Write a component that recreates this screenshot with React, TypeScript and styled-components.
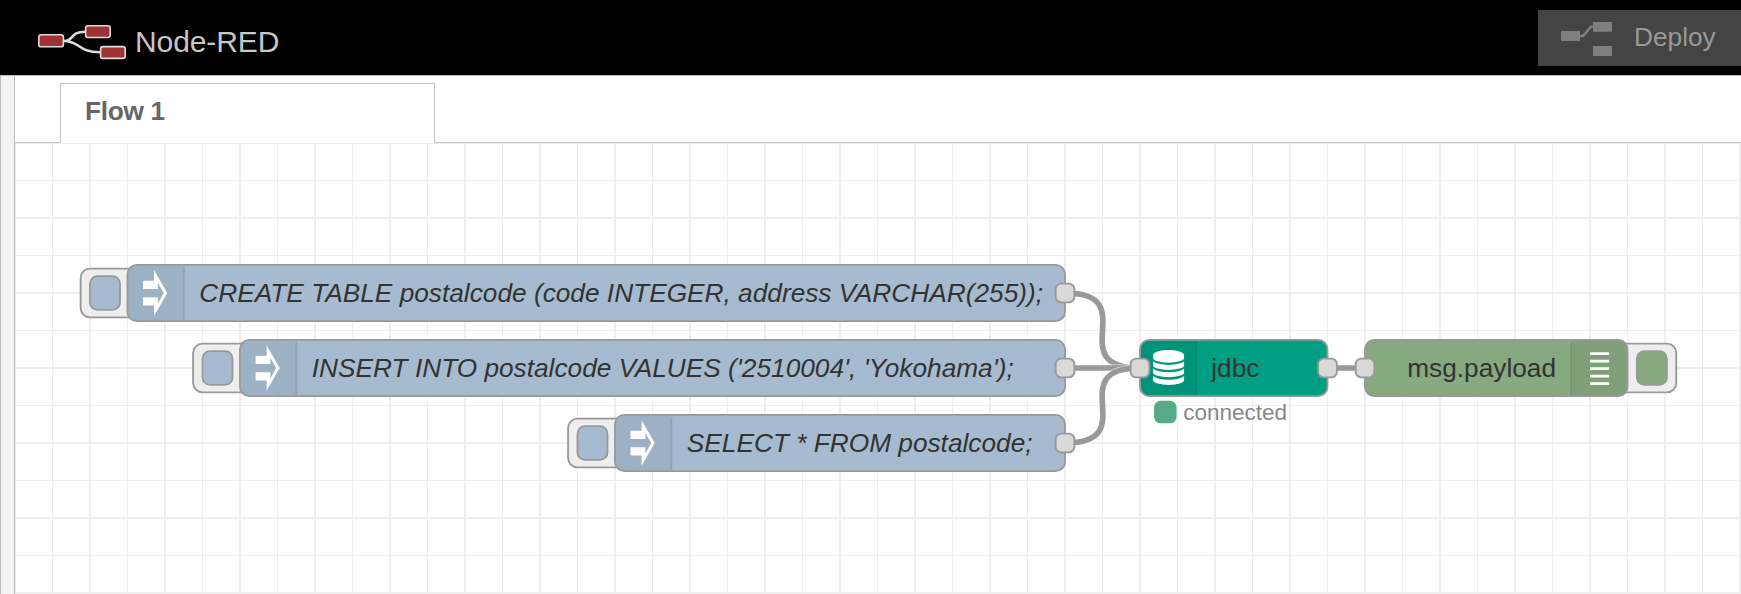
import React from "react";
import styled, { createGlobalStyle, css } from "styled-components";

const GRID = 75;
const SCALE = 1.875;

const GlobalStyle = createGlobalStyle`
  html, body { margin: 0; padding: 0; background: #fff; }
  body { font-family: "Liberation Sans", Arial, Helvetica, sans-serif; overflow: hidden; }
`;

const Editor = styled.div`
  display: flex;
  flex-direction: column;
  width: 100vw;
  height: 100vh;
  overflow: hidden;
`;

const Header = styled.header`
  display: flex;
  flex: none;
  justify-content: space-between;
  height: 75px;
  background: #000;
`;

const Brand = styled.div`
  display: flex;
  align-items: flex-start;
  padding-left: 36px;
`;

const Logo = styled.svg`
  display: block;
  width: 92px;
  height: 40px;
  margin-top: 22px;
`;

const Title = styled.h1`
  margin: 24px 0 0 7px;
  font-size: 30px;
  font-weight: 400;
  line-height: 35px;
  letter-spacing: -0.1px;
  color: #c7c7c7;
`;

const DeployButton = styled.button`
  display: flex;
  align-items: flex-start;
  box-sizing: border-box;
  width: 203px;
  height: 56px;
  margin: 10px 0 0;
  padding: 12px 0 0 23px;
  border: 0;
  background: #444;
  color: #999;
  font: 26.25px/30px "Liberation Sans", Arial, sans-serif;
`;

const DeployIcon = styled.svg`
  display: block;
  width: 51px;
  height: 34px;
  margin-right: 22px;
  flex: none;
`;

const DeployLabel = styled.span`
  display: block;
`;

const Main = styled.main`
  display: flex;
  flex: 1;
  min-height: 0;
`;

const PaletteStrip = styled.aside`
  box-sizing: border-box;
  flex: none;
  width: 15px;
  border: solid #bbb;
  border-width: 1px 1px 0 1px;
  background: #f3f3f3;
`;

const Workspace = styled.section`
  display: flex;
  flex: 1;
  flex-direction: column;
  min-width: 0;
  border-top: 1px solid #bbb;
`;

const TabBar = styled.div`
  display: flex;
  flex: none;
  height: 67px;
`;

const TabFill = styled.div<{ $width?: number }>`
  box-sizing: border-box;
  border-bottom: 1px solid #c4c4c4;
  ${(p) => (p.$width ? css`flex: none; width: ${p.$width}px;` : css`flex: 1;`)}
`;

const Tab = styled.div`
  box-sizing: border-box;
  width: 375px;
  height: 60px;
  margin-top: 7px;
  padding: 12px 0 0 24px;
  border: solid #c4c4c4;
  border-width: 1px 1px 0 1px;
  font-size: 26.25px;
  font-weight: 700;
  line-height: 30px;
  letter-spacing: -0.3px;
  color: #666;
`;

const Canvas = styled.div`
  position: relative;
  flex: 1;
  overflow: hidden;
  background-image:
    linear-gradient(90deg, #eee 1px, transparent 1px 37px, #eee 37px 38px, transparent 38px 74px, #eee 74px),
    linear-gradient(180deg, #eee 1px, transparent 1px 37px, #eee 37px 38px, transparent 38px 74px, #eee 74px);
  background-size: ${GRID}px ${GRID}px;
`;

/* Outlines are centred on the node edges, so the layer is shifted by half a unit. */
const Flow = styled.div`
  position: absolute;
  left: 0;
  top: 0;
  width: 925px;
  height: 245px;
  transform: scale(${SCALE}) translate(-0.5px, -0.5px);
  transform-origin: 0 0;
`;

const Wires = styled.svg`
  position: absolute;
  left: 0;
  top: 0;
  width: 925px;
  height: 245px;
  fill: none;
`;

const NodeBox = styled.div<{ $x: number; $y: number; $w: number }>`
  position: absolute;
  left: ${(p) => p.$x}px;
  top: ${(p) => p.$y}px;
  width: ${(p) => p.$w + 1}px;
  height: 31px;
`;

const Body = styled.div<{ $color: string; $reverse?: boolean }>`
  position: relative;
  display: flex;
  flex-direction: ${(p) => (p.$reverse ? "row-reverse" : "row")};
  box-sizing: border-box;
  height: 31px;
  border: 1px solid #999;
  border-radius: 5.5px;
  background: ${(p) => p.$color};
  overflow: hidden;
`;

const IconCell = styled.div<{ $reverse?: boolean }>`
  position: relative;
  display: flex;
  justify-content: ${(p) => (p.$reverse ? "flex-end" : "flex-start")};
  flex: none;
  width: ${(p) => (p.$reverse ? 30 : 29.5)}px;
  height: 29px;
  background: rgba(0, 0, 0, 0.05);
  &::after {
    content: "";
    position: absolute;
    top: 0.5px;
    bottom: 0.5px;
    ${(p) => (p.$reverse ? "left: 0;" : "right: 0;")}
    width: 1px;
    background: rgba(0, 0, 0, 0.07);
  }
`;

const Icon = styled.svg`
  display: block;
  flex: none;
  width: 29px;
  height: 29px;
  fill: #fff;
`;

const Label = styled.span<{ $italic?: boolean }>`
  padding: 0 7.6px 0 8px;
  font-size: 14px;
  font-style: ${(p) => (p.$italic ? "italic" : "normal")};
  line-height: 29px;
  white-space: nowrap;
  color: #333;
  transform: translateY(0.4px);
  ${(p) => p.$italic && css`padding-left: 8.3px;`}
`;

const Port = styled.i<{ $side: "in" | "out" }>`
  position: absolute;
  top: 10px;
  ${(p) => (p.$side === "in" ? "left: -5px;" : "right: -5px;")}
  box-sizing: border-box;
  width: 11px;
  height: 11px;
  border: 1px solid #999;
  border-radius: 3.5px;
  background: #d9d9d9;
`;

const Trigger = styled.div<{ $side: "left" | "right" }>`
  position: absolute;
  top: 2px;
  ${(p) => (p.$side === "left" ? "left: -25px;" : "right: -26px;")}
  display: flex;
  align-items: center;
  justify-content: ${(p) => (p.$side === "left" ? "flex-start" : "flex-end")};
  box-sizing: border-box;
  width: 33px;
  height: 27px;
  padding: 0 4px;
  border: 1px solid #999;
  border-radius: 5.5px;
  background: #eee;
`;

const TriggerKey = styled.i<{ $color: string }>`
  box-sizing: border-box;
  width: 17px;
  height: 19px;
  border: 1px solid #999;
  border-radius: 4.5px;
  background: ${(p) => p.$color};
`;

const Status = styled.div`
  position: absolute;
  left: 8px;
  top: 33px;
  display: flex;
  gap: 3.5px;
  font-size: 12px;
  line-height: 13px;
  color: #888;
`;

const StatusDot = styled.i`
  width: 12px;
  height: 12px;
  border-radius: 3.5px;
  background: #5a8;
`;

type Kind = "inject" | "jdbc" | "debug";

interface FlowNode {
  kind: Kind;
  label: string;
  x: number;
  y: number;
  w: number;
  status?: string;
}

const COLORS: Record<Kind, string> = {
  inject: "#a6bbcf",
  jdbc: "#009e82",
  debug: "#87a980",
};

const NODES: FlowNode[] = [
  { kind: "inject", label: "CREATE TABLE postalcode (code INTEGER, address VARCHAR(255));", x: 60, y: 65, w: 500 },
  { kind: "inject", label: "INSERT INTO postalcode VALUES ('2510004', 'Yokohama');", x: 120, y: 105, w: 440 },
  { kind: "inject", label: "SELECT * FROM postalcode;", x: 320, y: 145, w: 240 },
  { kind: "jdbc", label: "jdbc", x: 600, y: 105, w: 100, status: "connected" },
  { kind: "debug", label: "msg.payload", x: 720, y: 105, w: 140 },
];

const WIRES = [
  "M560 80C602.4 80 557.6 120 600 120",
  "M560 120H600",
  "M560 160C602.4 160 557.6 120 600 120",
  "M700 120H720",
];

const KindIcon = ({ kind }: { kind: Kind }) => {
  if (kind === "inject") {
    return (
      <Icon viewBox="0.5 0.5 29 29">
        <path d="M8.3 8.5H14.2V2.9L21.2 15L14.2 27.1V21.6H8.3V17.2H16.2V20.6L19.3 15L16.2 9.6V12.9H8.3Z" />
      </Icon>
    );
  }
  if (kind === "jdbc") {
    return (
      <Icon viewBox="0.5 0.5 29 29">
        <path d="M7 8.1A8.25 2.7 0 0 1 23.5 8.1V9.6A8.25 2.6 0 0 1 7 9.6Z" />
        <path d="M7 11.4A8.6 2.7 0 0 0 23.5 11.4V13.6A8.25 2.4 0 0 1 7 13.6Z" />
        <path d="M7 15.3A8.6 2.7 0 0 0 23.5 15.3V17.5A8.25 2.4 0 0 1 7 17.5Z" />
        <path d="M7 19.3A8.6 2.7 0 0 0 23.5 19.3V21.5A8.25 2.5 0 0 1 7 21.5Z" />
      </Icon>
    );
  }
  return (
    <Icon viewBox="0.5 0.5 29 29">
      <path d="M10 6.6h10.2v1.5H10zM10 10.6h10.2v1.5H10zM10 14.6h10.2v1.5H10zM10 18.6h10.2v1.5H10zM10 22.6h10.2v1.5H10z" />
    </Icon>
  );
};

const NodeView = ({ node }: { node: FlowNode }) => {
  const { kind, label, x, y, w, status } = node;
  const reverse = kind === "debug";
  return (
    <NodeBox $x={x} $y={y} $w={w}>
      {kind !== "jdbc" && (
        <Trigger $side={reverse ? "right" : "left"}>
          <TriggerKey $color={COLORS[kind]} />
        </Trigger>
      )}
      <Body $color={COLORS[kind]} $reverse={reverse}>
        <IconCell $reverse={reverse}>
          <KindIcon kind={kind} />
        </IconCell>
        <Label $italic={kind === "inject"}>{label}</Label>
      </Body>
      {kind !== "inject" && <Port $side="in" />}
      {kind !== "debug" && <Port $side="out" />}
      {status && (
        <Status>
          <StatusDot />
          {status}
        </Status>
      )}
    </NodeBox>
  );
};

export default function App() {
  return (
    <Editor>
      <GlobalStyle />
      <Header>
        <Brand>
          <Logo viewBox="36 22 92 40" fill="#a03236" stroke="#ddd">
            <path d="M64 41C74 41 70 31.7 85 31.7M64 41C80 41 78 52.3 100 52.3" fill="none" strokeWidth="2.6" />
            <g strokeWidth="1.6">
              <rect x="38.8" y="34.8" width="24.6" height="12" rx="2.4" />
              <rect x="85.6" y="25.7" width="24.6" height="11.8" rx="2.4" />
              <rect x="100.6" y="46.6" width="24.6" height="11.8" rx="2.4" />
            </g>
          </Logo>
          <Title>Node-RED</Title>
        </Brand>
        <DeployButton>
          <DeployIcon viewBox="0 0 51 34" fill="#7f7f7f">
            <path d="M0 9h19v10H0zM32 0h19v9.7H32zM32 24h19v10H32z" />
            <path d="M19 14H22L30 4.6H33" fill="none" stroke="#7f7f7f" strokeWidth="2.4" />
          </DeployIcon>
          <DeployLabel>Deploy</DeployLabel>
        </DeployButton>
      </Header>
      <Main>
        <PaletteStrip />
        <Workspace>
          <TabBar>
            <TabFill $width={45} />
            <Tab>Flow 1</Tab>
            <TabFill />
          </TabBar>
          <Canvas>
            <Flow>
              <Wires viewBox="-0.5 -0.5 925 245">
                {WIRES.map((d) => (
                  <g key={d}>
                    <path d={d} stroke="#fff" strokeOpacity="0.5" strokeWidth="4" />
                    <path d={d} stroke="#999" strokeWidth="3" />
                  </g>
                ))}
              </Wires>
              {NODES.map((n) => (
                <NodeView key={n.label} node={n} />
              ))}
            </Flow>
          </Canvas>
        </Workspace>
      </Main>
    </Editor>
  );
}
